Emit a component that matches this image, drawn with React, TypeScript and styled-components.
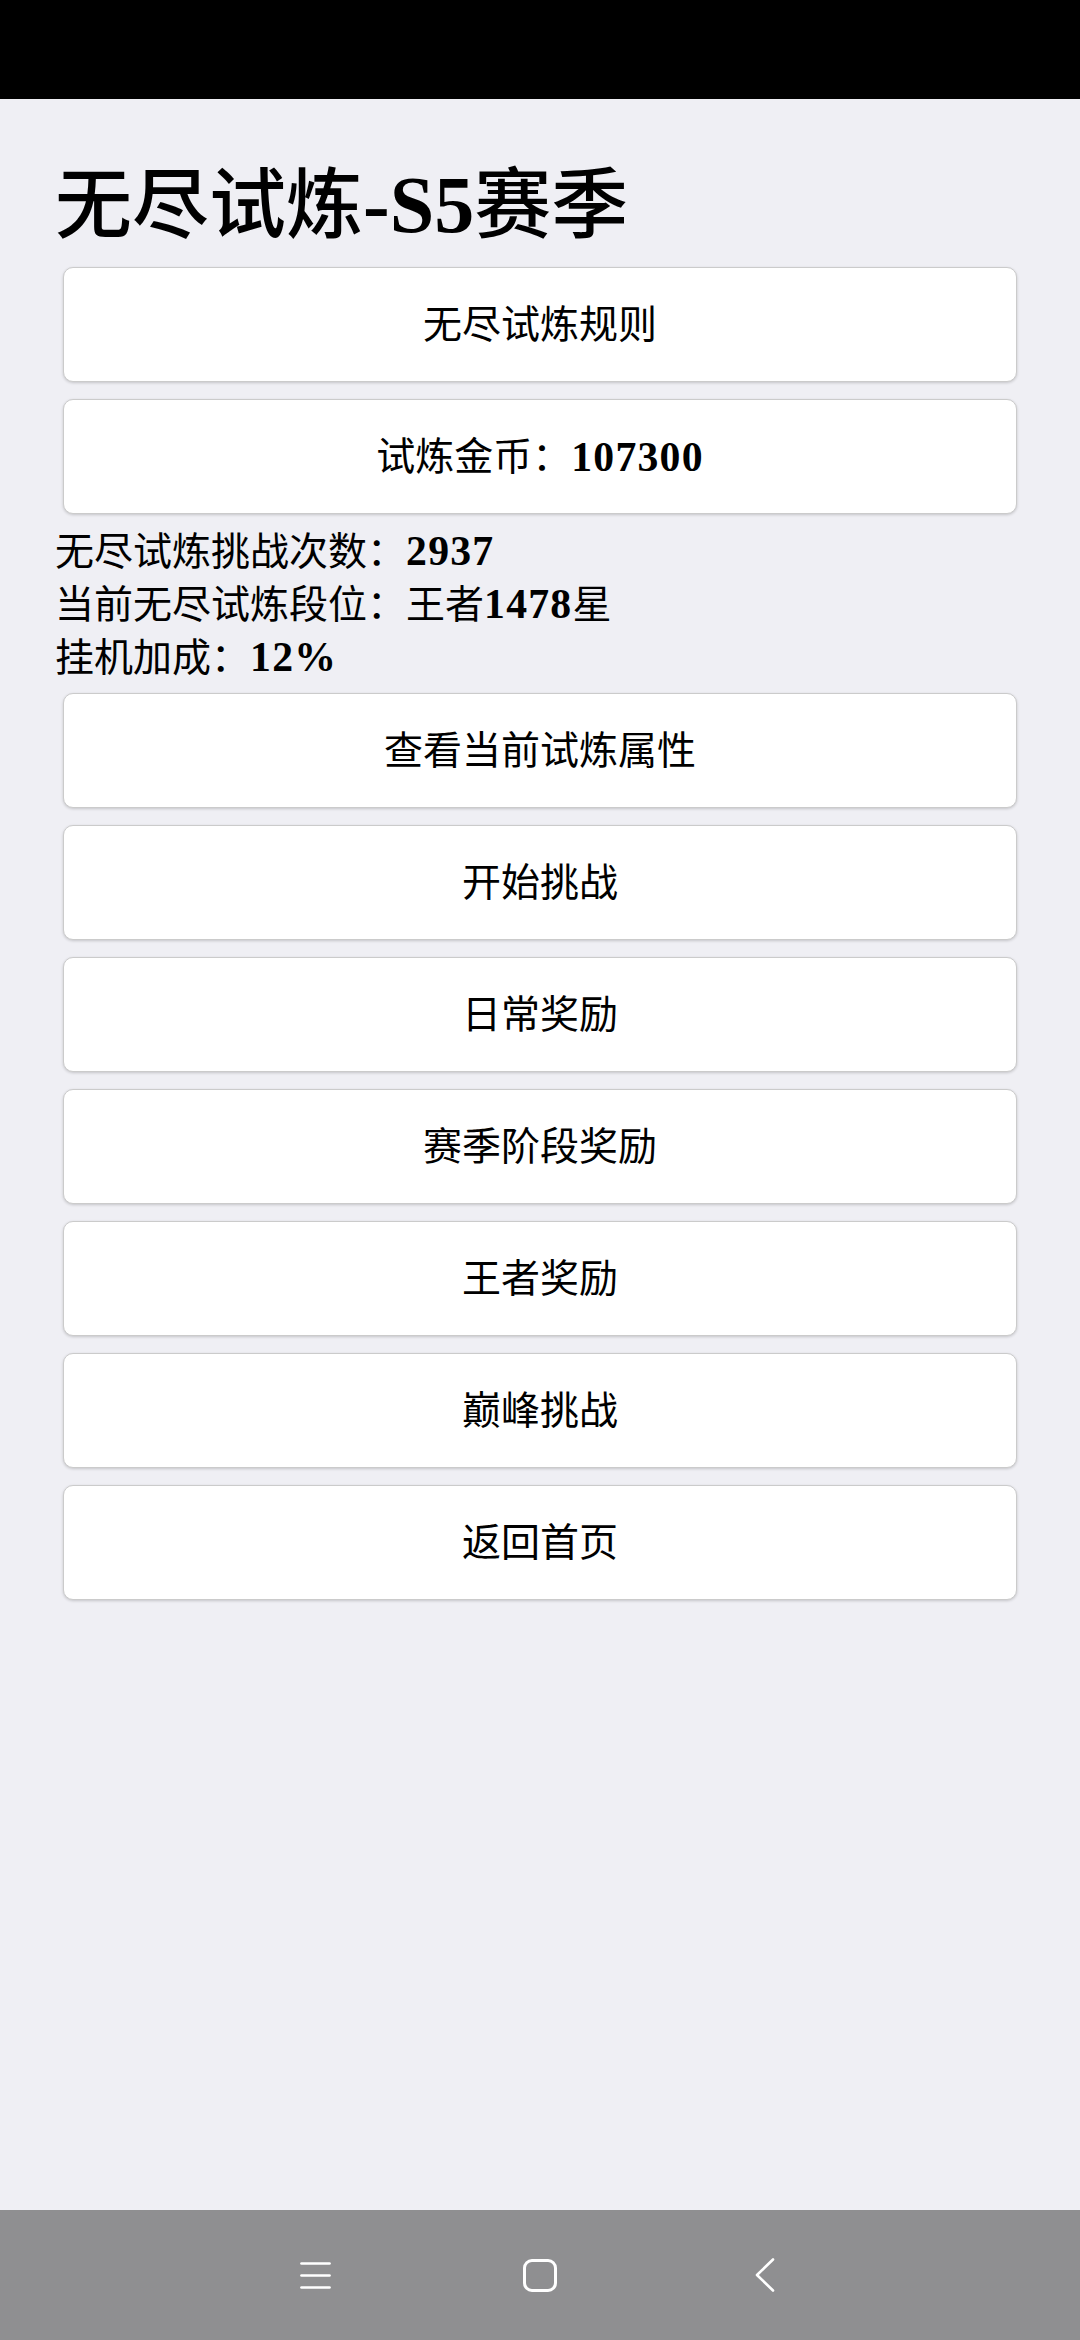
import React from 'react';
import styled, { createGlobalStyle } from 'styled-components';

const Global = createGlobalStyle`
  html, body { margin: 0; padding: 0; background: #efeff4; }
  body { font-family: "Liberation Serif", "Noto Sans CJK SC", serif; color: #000; }
  * { box-sizing: border-box; }
`;

const Screen = styled.div`
  width: 1080px;
  height: 2340px;
  display: flex;
  flex-direction: column;
  background: #efeff4;
  overflow: hidden;
`;

const StatusBar = styled.div`
  height: 99px;
  flex-shrink: 0;
  background: #000;
`;

const Content = styled.main`
  flex: 1;
  padding: 0 56px 0 55px;
  display: flex;
  flex-direction: column;
`;

const Title = styled.h1`
  margin: 59px 0 0;
  font-size: 77px;
  line-height: 96px;
  font-weight: 500;
  white-space: nowrap;
`;

const Latin = styled.span<{ $tight?: boolean }>`
  font-family: "Liberation Serif", serif;
  font-weight: 700;
  font-size: ${(p) => (p.$tight ? '1.04em' : '1.07em')};
  letter-spacing: ${(p) => (p.$tight ? '0' : '0.03em')};
  line-height: 0;
`;

const ButtonGroup = styled.div<{ $top: number }>`
  margin-top: ${(p) => p.$top}px;
  padding: 0 7px 0 8px;
  display: flex;
  flex-direction: column;
  gap: 17px;
`;

const ActionButton = styled.button`
  appearance: none;
  height: 115px;
  width: 100%;
  margin: 0;
  padding: 0;
  background: #fff;
  border: 1.5px solid #cbcbcb;
  border-radius: 10px;
  box-shadow: 0 1px 3px rgba(0, 0, 0, 0.18);
  display: flex;
  align-items: center;
  justify-content: center;
  font-family: "Liberation Serif", "Noto Sans CJK SC", serif;
  font-size: 39px;
  font-weight: 400;
  color: #000;
  line-height: 1;
`;

const Info = styled.div`
  margin-top: 11px;
  display: flex;
  flex-direction: column;
`;

const InfoLine = styled.div`
  font-size: 39px;
  line-height: 53px;
  font-weight: 400;
  white-space: nowrap;
`;

const NavBar = styled.nav`
  height: 130px;
  flex-shrink: 0;
  background: #8f8f91;
  display: flex;
  align-items: center;
  justify-content: center;
  gap: 165px;
`;

const NavSlot = styled.div`
  width: 60px;
  height: 40px;
  display: flex;
  align-items: center;
  justify-content: center;
`;

const MenuIcon = () => (
  <svg width="31" height="27" viewBox="0 0 31 27" fill="none">
    <g stroke="#fff" strokeWidth="2.7" strokeLinecap="round">
      <line x1="1.5" y1="1.5" x2="29.5" y2="1.5" />
      <line x1="1.5" y1="13.5" x2="29.5" y2="13.5" />
      <line x1="1.5" y1="25.5" x2="29.5" y2="25.5" />
    </g>
  </svg>
);

const HomeIcon = () => (
  <svg width="34" height="33" viewBox="0 0 34 33" fill="none">
    <rect x="1.5" y="1.5" width="31" height="30" rx="7.5" stroke="#fff" strokeWidth="3" />
  </svg>
);

const BackIcon = () => (
  <svg width="20" height="34" viewBox="0 0 20 34" fill="none">
    <polyline
      points="18,1.5 2,17 18,32.5"
      stroke="#fff"
      strokeWidth="2.6"
      strokeLinecap="round"
      strokeLinejoin="round"
    />
  </svg>
);

const lowerButtons = ['查看当前试炼属性', '开始挑战', '日常奖励', '赛季阶段奖励', '王者奖励', '巅峰挑战', '返回首页'];

export default function App() {
  return (
    <>
      <Global />
      <Screen>
        <StatusBar />
        <Content>
          <Title>
            无尽试炼<Latin $tight>-S5</Latin>赛季
          </Title>
          <ButtonGroup $top={13}>
            <ActionButton>无尽试炼规则</ActionButton>
            <ActionButton>
              试炼金币：<Latin>107300</Latin>
            </ActionButton>
          </ButtonGroup>
          <Info>
            <InfoLine>
              无尽试炼挑战次数：<Latin>2937</Latin>
            </InfoLine>
            <InfoLine>
              当前无尽试炼段位：王者<Latin>1478</Latin>星
            </InfoLine>
            <InfoLine>
              挂机加成：<Latin>12%</Latin>
            </InfoLine>
          </Info>
          <ButtonGroup $top={9}>
            {lowerButtons.map((label) => (
              <ActionButton key={label}>{label}</ActionButton>
            ))}
          </ButtonGroup>
        </Content>
        <NavBar>
          <NavSlot>
            <MenuIcon />
          </NavSlot>
          <NavSlot>
            <HomeIcon />
          </NavSlot>
          <NavSlot>
            <BackIcon />
          </NavSlot>
        </NavBar>
      </Screen>
    </>
  );
}
